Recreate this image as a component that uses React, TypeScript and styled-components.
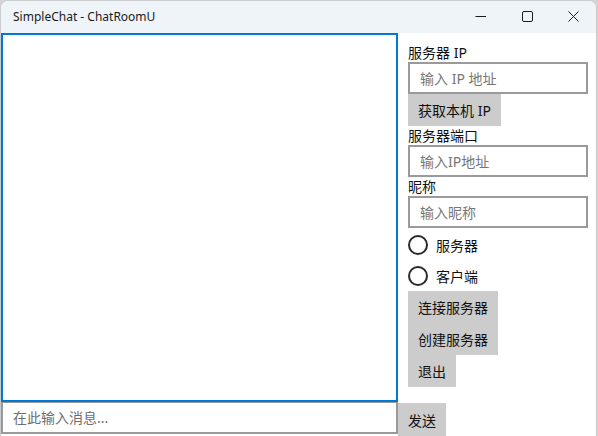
import React from "react";
import styled, { createGlobalStyle } from "styled-components";

const Global = createGlobalStyle`
  html, body { margin: 0; padding: 0; background: #d4d4d4; }
  body { width: 598px; height: 436px; overflow: hidden; }
  * { box-sizing: border-box; }
`;

const UI_FONT = `"Segoe UI", "Noto Sans", "Noto Sans CJK SC", sans-serif`;
const CJK_FONT = `"Noto Sans", "Noto Sans CJK SC", sans-serif`;

const Window = styled.div`
  width: 597px;
  height: 436px;
  background: #ffffff;
  border: 1px solid #c9ccce;
  border-bottom: none;
  border-radius: 8px 8px 0 0;
  overflow: hidden;
  display: flex;
  flex-direction: column;
`;

const TitleBar = styled.div`
  height: 32px;
  flex: none;
  background: #eef4f8;
  display: flex;
  align-items: center;
  justify-content: space-between;
`;

const Title = styled.div`
  font-family: ${UI_FONT};
  font-size: 12px;
  color: #1b1b1b;
  padding-left: 12px;
  padding-bottom: 2px;
`;

const Controls = styled.div`
  display: flex;
  height: 32px;
`;

const CtrlButton = styled.div`
  width: 46px;
  height: 32px;
  display: flex;
  align-items: center;
  justify-content: center;
  padding-bottom: 2px;
`;

const Body = styled.div`
  flex: 1;
  display: grid;
  grid-template-columns: 397px 1fr;
  grid-template-rows: 369px 33px;
`;

const ChatList = styled.div`
  border: 2px solid #0078d4;
  background: #ffffff;
`;

const MessageInput = styled.input`
  height: 32px;
  width: 397px;
  border: 2px solid #9a9a9a;
  border-top: 1px solid #9a9a9a;
  padding: 0 10px;
  font-family: ${CJK_FONT};
  font-size: 14px;
  color: #111;
  outline: none;
  background: #fff;
  &::placeholder { color: #6e6e6e; }
`;

const SidePanel = styled.div`
  padding: 10px 0 0 10px;
  display: flex;
  flex-direction: column;
  align-items: flex-start;
`;

const Label = styled.div`
  font-family: ${CJK_FONT};
  font-size: 14px;
  line-height: 19px;
  height: 19px;
  color: #111;
`;

const Field = styled.input`
  width: 180px;
  height: 32px;
  border: 2px solid #9a9a9a;
  padding: 0 10px;
  font-family: ${CJK_FONT};
  font-size: 14px;
  outline: none;
  background: #fff;
  color: #111;
  &::placeholder { color: #777777; }
`;

const Button = styled.div<{ $h?: number }>`
  height: ${(p) => p.$h ?? 32}px;
  padding: 0 10px;
  background: #cccccc;
  display: flex;
  align-items: center;
  font-family: ${CJK_FONT};
  font-size: 14px;
  color: #111;
  white-space: nowrap;
`;

const SendCell = styled.div`
  display: flex;
  align-items: flex-start;
  padding-top: 1px;
`;

const RadioGroup = styled.div`
  padding-top: 1px;
  display: flex;
  flex-direction: column;
`;

const RadioRow = styled.div`
  height: 31px;
  display: flex;
  align-items: center;
  gap: 8px;
  font-family: ${CJK_FONT};
  font-size: 14px;
  color: #111;
`;

const RadioCircle = styled.span`
  width: 20px;
  height: 20px;
  border-radius: 50%;
  border: 2px solid #2a2a2a;
  display: inline-block;
`;

export default function App() {
  return (
    <>
      <Global />
      <Window>
        <TitleBar>
          <Title>SimpleChat - ChatRoomU</Title>
          <Controls>
            <CtrlButton>
              <svg width="12" height="12" viewBox="0 0 12 12">
                <line x1="0.5" y1="6.5" x2="11" y2="6.5" stroke="#1b1b1b" strokeWidth="1" />
              </svg>
            </CtrlButton>
            <CtrlButton>
              <svg width="11" height="11" viewBox="0 0 11 11">
                <rect x="0.5" y="0.5" width="10" height="10" rx="1.5" fill="none" stroke="#1b1b1b" strokeWidth="1" />
              </svg>
            </CtrlButton>
            <CtrlButton>
              <svg width="11" height="11" viewBox="0 0 11 11">
                <path d="M0.5 0.5 L10.5 10.5 M10.5 0.5 L0.5 10.5" stroke="#1b1b1b" strokeWidth="1" fill="none" />
              </svg>
            </CtrlButton>
          </Controls>
        </TitleBar>
        <Body>
          <ChatList />
          <SidePanel>
            <Label>服务器 IP</Label>
            <Field placeholder="输入 IP 地址" />
            <Button>获取本机 IP</Button>
            <Label>服务器端口</Label>
            <Field placeholder="输入IP地址" />
            <Label>昵称</Label>
            <Field placeholder="输入昵称" />
            <RadioGroup>
              <RadioRow>
                <RadioCircle />
                服务器
              </RadioRow>
              <RadioRow>
                <RadioCircle />
                客户端
              </RadioRow>
            </RadioGroup>
            <Button>连接服务器</Button>
            <Button>创建服务器</Button>
            <Button>退出</Button>
          </SidePanel>
          <MessageInput placeholder="在此输入消息..." />
          <SendCell>
            <Button $h={34}>发送</Button>
          </SendCell>
        </Body>
      </Window>
    </>
  );
}
